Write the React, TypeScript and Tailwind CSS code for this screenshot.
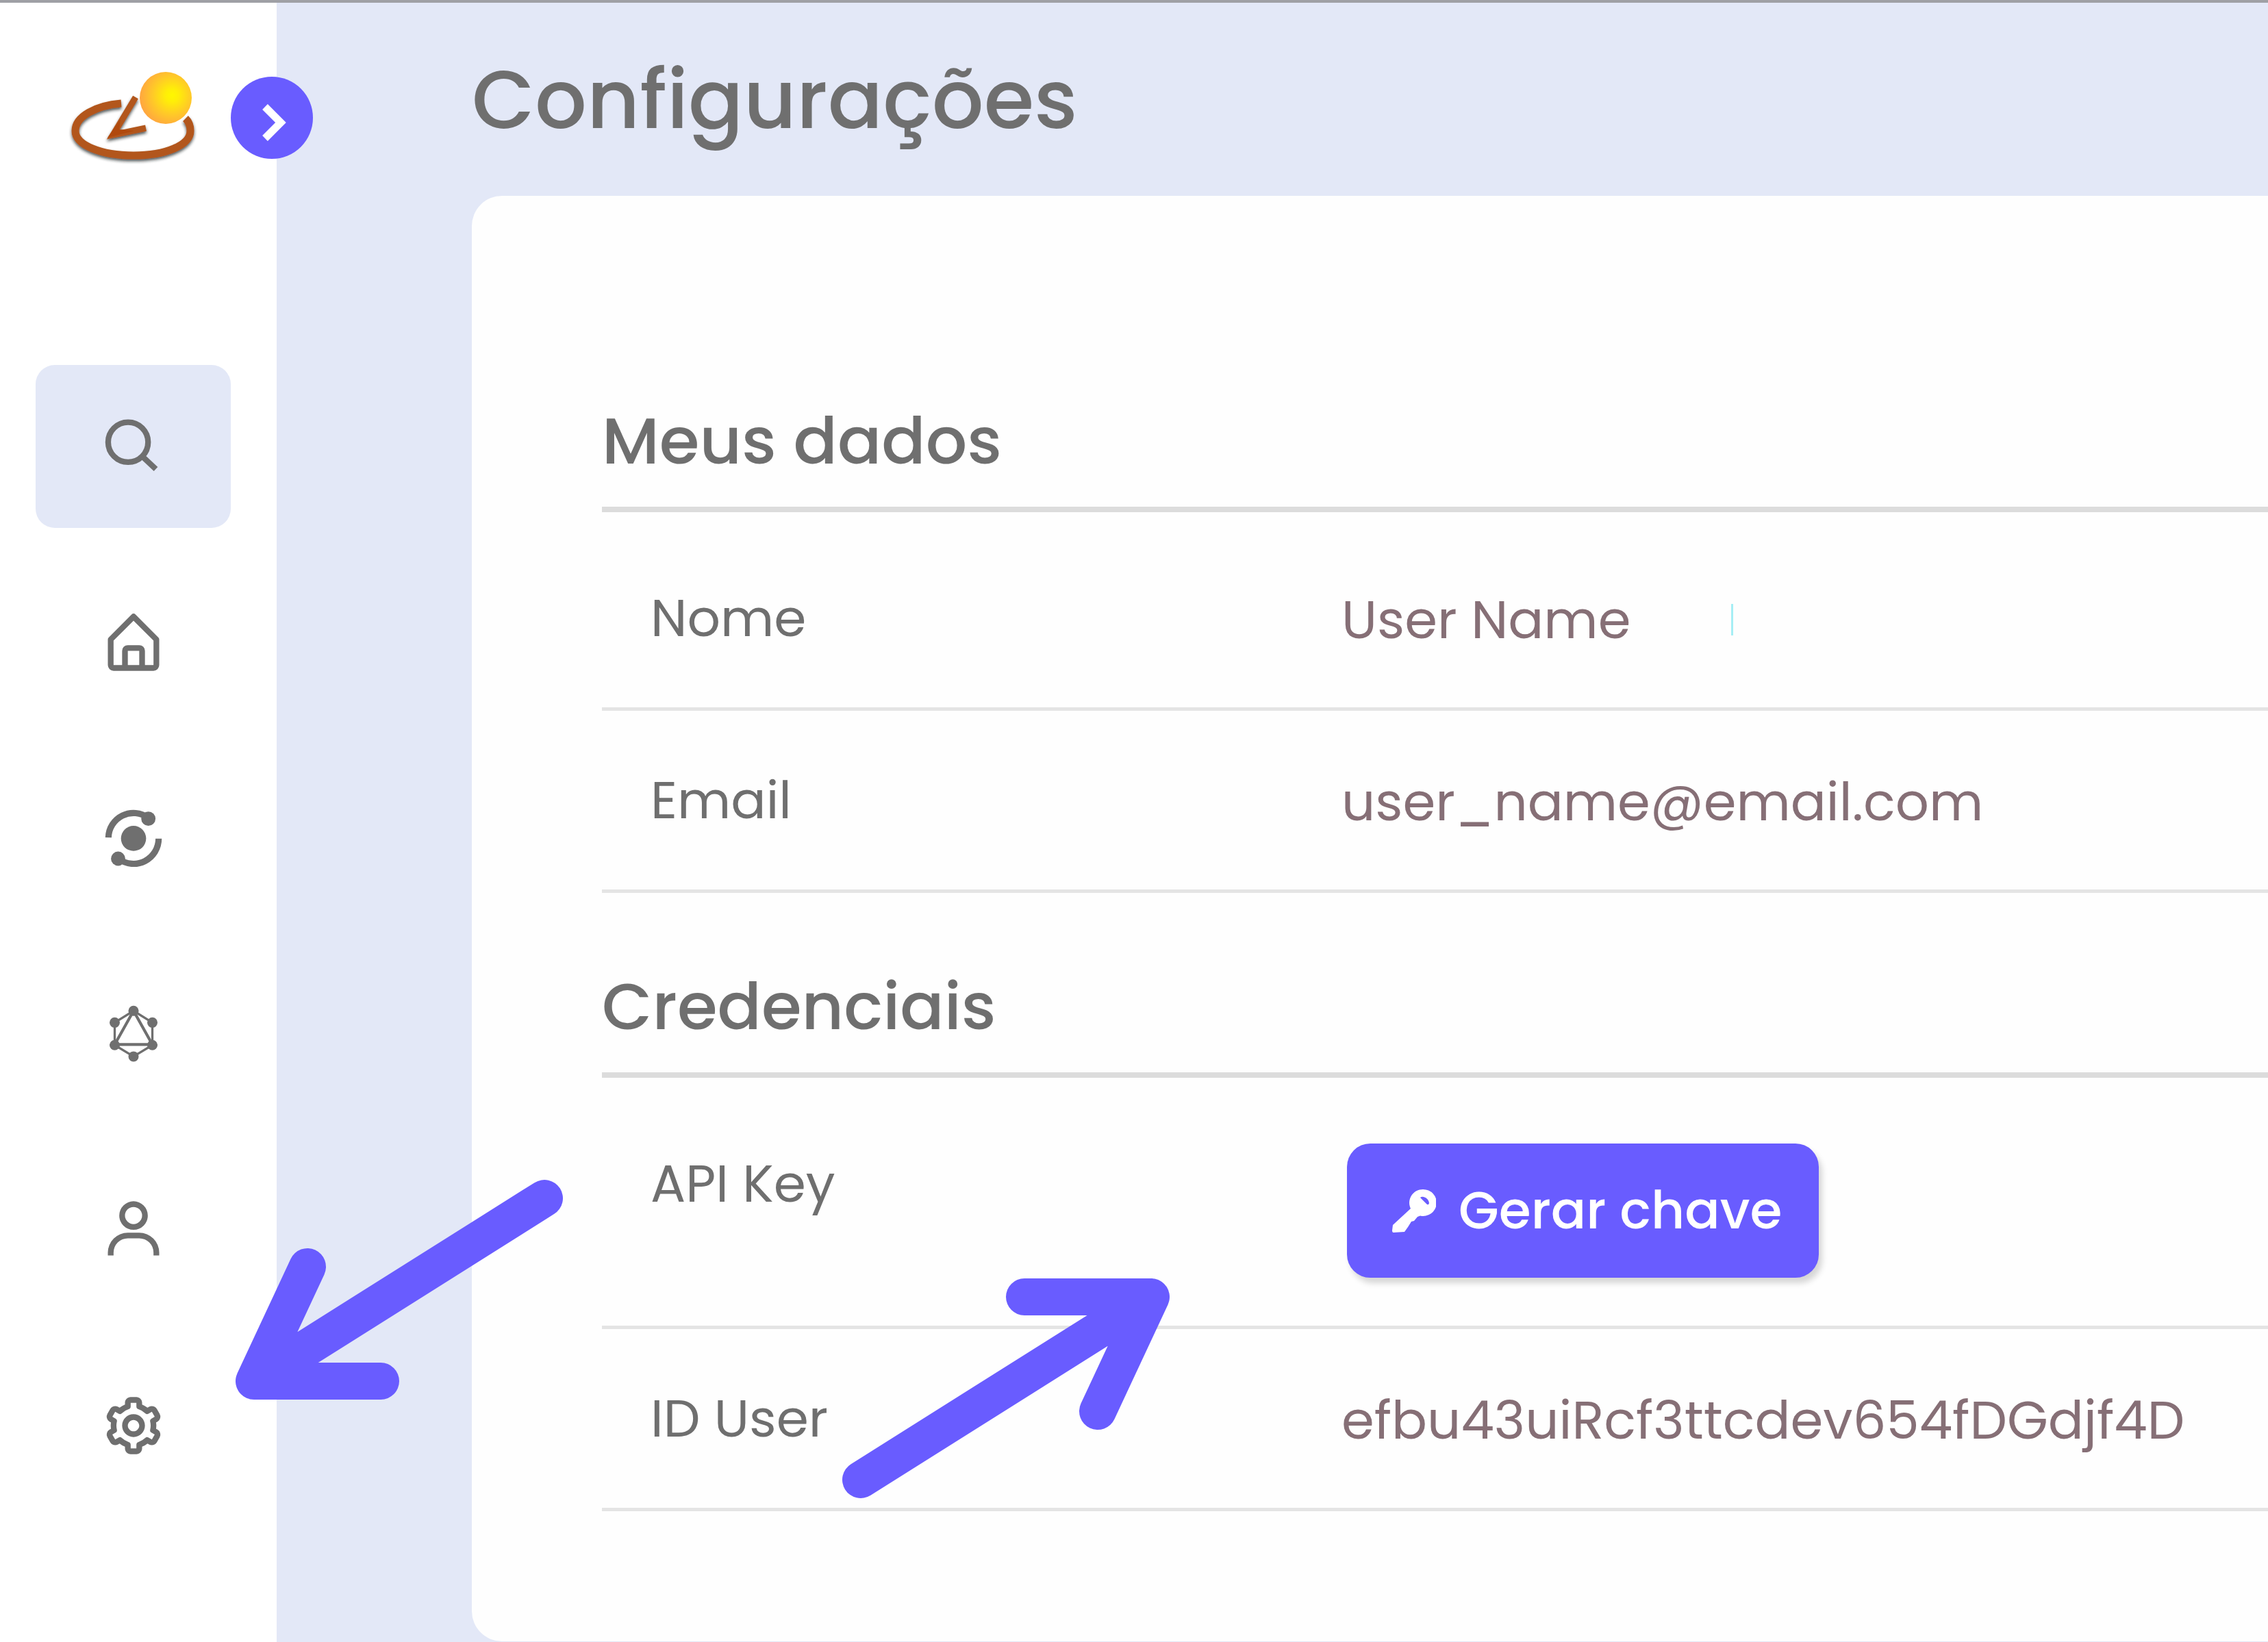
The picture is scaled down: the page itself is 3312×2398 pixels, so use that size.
import type { ReactNode } from "react";
import { BiCog, BiUser } from "react-icons/bi";

function LogoMark() {
  return (
    <svg viewBox="0 0 190 140" className="h-[140px] w-[190px]" role="img" aria-label="Logo">
      <defs>
        <radialGradient id="sun" cx="0.62" cy="0.45" r="0.62">
          <stop offset="0" stopColor="#fff700" />
          <stop offset="0.2" stopColor="#ffee08" />
          <stop offset="0.6" stopColor="#ffc928" />
          <stop offset="1" stopColor="#ffa640" />
        </radialGradient>
        <filter id="logoShade" x="-10%" y="-10%" width="120%" height="130%">
          <feDropShadow dx="0" dy="3" stdDeviation="2" floodColor="#1c2420" floodOpacity="0.75" />
        </filter>
      </defs>
      <g filter="url(#logoShade)" fill="none" stroke="#b2561c">
        <path d="M77 51 C40 54 10 70 10 91 C10 112 48 127 95 127 C142 127 178 112 178 91 C178 84 176 78 171 73" strokeWidth="11" />
        <path d="M98 42 L65 97 L113 87" strokeWidth="9" />
        <path d="M57 101 L76 74 L74 89 L96 91 Z" fill="#b04a0a" stroke="none" />
      </g>
      <circle cx="142" cy="43" r="38" fill="url(#sun)" />
    </svg>
  );
}

function SearchIcon() {
  return (
    <svg viewBox="0 0 24 24" className="size-[100px]" fill="none" stroke="currentColor" strokeWidth="2" aria-hidden="true">
      <circle cx="10.1" cy="10.5" r="7" />
      <path d="M15 15.4 L19.8 19.9" />
    </svg>
  );
}

function HomeIcon() {
  return (
    <svg viewBox="0 0 24 24" className="size-[100px]" fill="currentColor" aria-hidden="true">
      <path d="M5 22h14a2 2 0 0 0 2-2v-9a1 1 0 0 0-.29-.71l-8-8a1 1 0 0 0-1.41 0l-8 8A1 1 0 0 0 3 11v9a2 2 0 0 0 2 2zm5-2v-5h4v5zm-5-8.59 7-7 7 7V20h-3v-5a2 2 0 0 0-2-2h-4a2 2 0 0 0-2 2v5H5z" />
    </svg>
  );
}

function OrbitIcon() {
  return (
    <svg viewBox="0 0 24 24" className="size-[100px]" fill="currentColor" aria-hidden="true">
      <circle cx="12" cy="12.1" r="4.4" />
      <circle cx="17.2" cy="5.2" r="2.5" />
      <circle cx="6.6" cy="19.2" r="2.5" />
      <g fill="none" stroke="currentColor" strokeWidth="2.2">
        <path d="M3.2 11.8 A8.8 8.8 0 0 1 17.2 4.9" />
        <path d="M20.8 12.2 A8.8 8.8 0 0 1 6.8 19.3" />
      </g>
    </svg>
  );
}

function GraphIcon() {
  return (
    <svg viewBox="0 0 24 24" className="size-[100px]" fill="currentColor" aria-hidden="true">
      <g fill="none" stroke="currentColor" strokeWidth="0.8">
        <path d="M12 3.9 L18.6 8 L18.6 15.9 L12 19.9 L5.4 15.9 L5.4 8 Z" />
        <path d="M12 3.9 L18.6 15.7 L5.4 15.7 Z" strokeWidth="1" />
      </g>
      <circle cx="12" cy="3.9" r="1.8" />
      <circle cx="18.6" cy="8" r="1.8" />
      <circle cx="18.6" cy="15.9" r="1.8" />
      <circle cx="12" cy="19.9" r="1.8" />
      <circle cx="5.4" cy="15.9" r="1.8" />
      <circle cx="5.4" cy="8" r="1.8" />
    </svg>
  );
}

function KeyIcon() {
  return (
    <svg viewBox="0 0 64 64" className="size-16" aria-hidden="true">
      <path
        fill="currentColor"
        fillRule="evenodd"
        d="M45 1 a19.500 19.500 0 1 1 -4 38.500 L37 41 L32 47 L28 48 L23 56 L18 63 L2 64 Q0 64 0 61 L1 53 L27 29 A19.500 19.500 0 0 1 45 1 Z M41 13 Q43 11 46 12 Q53 14 54 21 Q53 25 50 22 Z"
      />
    </svg>
  );
}

const links: { label: string; icon: ReactNode }[] = [
  { label: "Início", icon: <HomeIcon /> },
  { label: "Processos", icon: <OrbitIcon /> },
  { label: "Grafos", icon: <GraphIcon /> },
  { label: "Usuário", icon: <BiUser className="size-[100px]" /> },
  { label: "Configurações", icon: <BiCog className="size-[100px]" /> },
];

function Sidebar() {
  return (
    <aside className="relative w-[404px] shrink-0 bg-white px-[52px]">
      <div className="-mx-[52px] px-[100px] pt-24">
        <LogoMark />
      </div>
      <button
        type="button"
        aria-label="Expandir menu"
        className="absolute -right-[53px] top-[108px] size-[120px] rounded-full bg-[#695cff] text-white"
      >
        <svg viewBox="0 0 120 120" className="size-full" fill="none" stroke="currentColor" strokeWidth="11" aria-hidden="true">
          <path d="M50 44 L73 67 L50 90" />
        </svg>
      </button>
      <nav className="mt-[293px] flex w-[285px] flex-col gap-12">
        <button
          type="button"
          aria-label="Pesquisar"
          className="flex h-[238px] items-center justify-center rounded-[28px] bg-[#e3e8f7]"
        >
          <SearchIcon />
        </button>
        {links.map((l) => (
          <a key={l.label} href="#" aria-label={l.label} className="flex h-[238px] items-center justify-center">
            {l.icon}
          </a>
        ))}
      </nav>
    </aside>
  );
}

function Row({ label, children }: { label: string; children: ReactNode }) {
  return (
    <div className="flex items-start border-b-[5px] border-[#e4e4e4] pb-[62px] pl-[71px] pt-[67px]">
      <dt className="w-[1009px] shrink-0 text-[76px] leading-[127px]">{label}</dt>
      <dd className="flex items-center whitespace-nowrap text-[77px] leading-[132px] text-[#866f76]">{children}</dd>
    </div>
  );
}

function Section({ title, children }: { title: string; children: ReactNode }) {
  return (
    <section>
      <h2 className="border-b-8 border-[#dcdcdc] pb-9 text-[95px] font-medium leading-[120px]">{title}</h2>
      <dl className="pt-6">{children}</dl>
    </section>
  );
}

export default function App() {
  return (
    <div className="relative flex min-h-screen overflow-hidden border-t-4 border-[#9fa0a5] bg-[#e3e8f7] font-['Poppins','Inter',sans-serif] text-[#6f6f6f]">
      <Sidebar />
      <main className="min-w-0 flex-1 pl-[285px]">
        <h1 className="pb-[60px] pt-[62px] text-[119px] font-medium leading-[160px]">Configurações</h1>
        <div className="flex flex-col gap-[106px] rounded-l-[44px] bg-[#fefefe] pb-[190px] pl-[190px] pt-[298px]">
          <Section title="Meus dados">
            <Row label="Nome">
              User Name
              <span className="ml-[147px] h-[46px] w-[3px] bg-[#a5eef5]" />
            </Row>
            <Row label="Email">user_name@email.com</Row>
          </Section>
          <Section title="Credenciais">
            <Row label="API Key">
              <button
                type="button"
                className="mb-2 ml-2 mt-[5px] flex h-[196px] items-center gap-[33px] rounded-[34px] bg-[#695cff] pl-[66px] pr-[54px] text-[76px] font-medium text-white shadow-[5px_8px_8px_rgba(0,0,0,0.16)]"
              >
                <KeyIcon />
                Gerar chave
              </button>
            </Row>
            <Row label="ID User">efbu43uiRcf3ttcdev654fDGdjf4D</Row>
          </Section>
        </div>
      </main>

      <svg
        viewBox="0 0 480 324"
        className="pointer-events-none absolute left-[343px] top-[1718px] h-[324px] w-[480px]"
        fill="none"
        stroke="#695cff"
        strokeWidth="54"
        strokeLinecap="round"
        strokeLinejoin="round"
        aria-hidden="true"
      >
        <path d="M452 28 L28 295 M106 128 L28 295 L213 295" />
      </svg>
      <svg
        viewBox="0 0 480 324"
        className="pointer-events-none absolute left-[1229px] top-[1861px] h-[324px] w-[480px]"
        fill="none"
        stroke="#695cff"
        strokeWidth="54"
        strokeLinecap="round"
        strokeLinejoin="round"
        aria-hidden="true"
      >
        <path d="M28 296 L452 29 M267 29 L452 29 L374 196" />
      </svg>
    </div>
  );
}
